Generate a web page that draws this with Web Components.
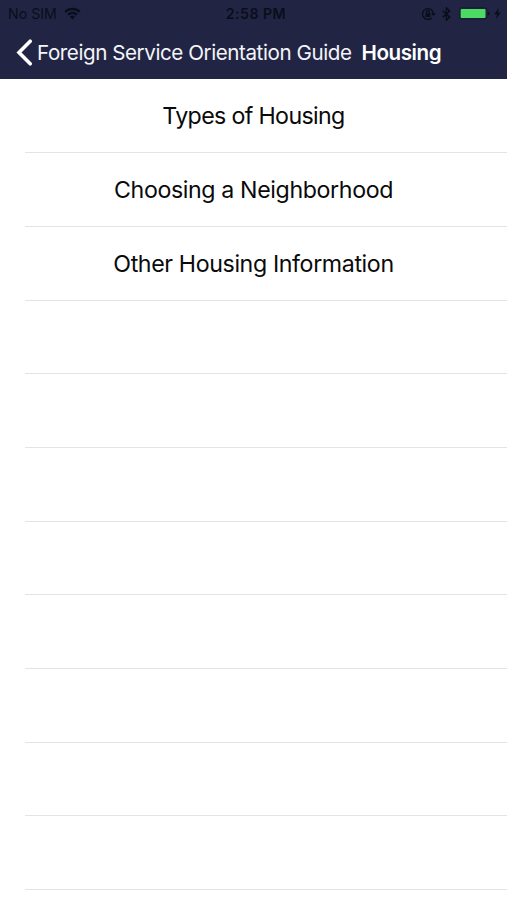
<!DOCTYPE html>
<html lang="en">
<head>
<meta charset="utf-8">
<meta name="viewport" content="width=device-width, initial-scale=1">
<title>Housing</title>
<style>
body{
    margin: 0;
    height: 900px;
    overflow: hidden;
    background: #fff;
    font-family: Inter, "Liberation Sans", sans-serif;
}
</style>
</head>
<body>
<guide-screen>
    <status-bar slot="header" carrier="No SIM" time="2:58 PM"></status-bar>
    <nav-bar slot="header" back="Foreign Service Orientation Guide">Housing</nav-bar>
    <list-row style="--spacing: -0.65px">Types of Housing</list-row>
    <list-row style="--spacing: -0.38px">Choosing a Neighborhood</list-row>
    <list-row style="--spacing: -0.38px">Other Housing Information</list-row>
    <list-row></list-row>
    <list-row></list-row>
    <list-row></list-row>
    <list-row></list-row>
    <list-row></list-row>
    <list-row></list-row>
    <list-row></list-row>
    <list-row></list-row>
</guide-screen>

<script>
const screenTemplate = document.createElement('template');
screenTemplate.innerHTML =
`
<style>
:host{
    display: block;
}
header{
    height: 79px;
    background: #212543;
    box-sizing: border-box;
}
main{
    padding-top: 0.47px;
}
</style>
<header><slot name="header"></slot></header>
<main><slot></slot></main>
`

class GuideScreen extends HTMLElement {
    constructor(){
        super();
        this.attachShadow({mode:'open'});
        this.shadowRoot.appendChild(screenTemplate.content.cloneNode(true));
    }
}

const statusTemplate = document.createElement('template');
statusTemplate.innerHTML =
`
<style>
:host{
    display: grid;
    grid-template-columns: 1fr auto 1fr;
    align-items: center;
    height: 27px;
    padding: 0 6px 0 8px;
    color: #0b0d1b;
    font-size: 14.2px;
    line-height: 27px;
}
.left, .right{
    display: flex;
    align-items: center;
}
.left{
    gap: 7px;
}
.right{
    justify-content: flex-end;
}
.time{
    padding-left: 3px;
    font-weight: 600;
    letter-spacing: 0.45px;
}
svg{
    display: block;
}
</style>
<div class="left">
    <span class="carrier"></span>
    <svg width="17" height="13" viewBox="0 0 17 13" fill="none" stroke="#0b0d1b" stroke-width="2.3">
        <path d="M1.2 4.9a10.4 10.4 0 0 1 14.6 0"/>
        <path d="M4 7.8a6.4 6.4 0 0 1 9 0"/>
        <path d="M8.5 12.4L5.9 9.8a3.7 3.7 0 0 1 5.2 0z" fill="#0b0d1b" stroke="none"/>
    </svg>
</div>
<span class="time"></span>
<div class="right">
    <svg width="15" height="14" viewBox="0 0 15 14" fill="none" stroke="#0b0d1b" stroke-width="1.4">
        <path d="M12.3 6.6A5.4 5.4 0 1 0 10.8 10.8"/>
        <path d="M10 6h4.8l-2.4 3z" fill="#0b0d1b" stroke="none"/>
        <path d="M5.4 6.5V5.2a1.5 1.5 0 0 1 3 0v1.3"/>
        <rect x="4.4" y="6.2" width="5" height="3.7" rx=".5" fill="#0b0d1b" stroke="none"/>
    </svg>
    <svg style="margin-left: 6px" width="9" height="14" viewBox="0 0 9 14" fill="none" stroke="#0b0d1b" stroke-width="1.5">
        <path d="M.8 3.9l7 6L4.4 13V1l3.4 3.1-7 6"/>
    </svg>
    <svg style="margin-left: 8px" width="31" height="13" viewBox="0 0 31 13">
        <rect x=".6" y=".9" width="27.6" height="11.2" rx="2.4" fill="none" stroke="#171a31" stroke-width="1"/>
        <rect x="1.7" y="2" width="24.8" height="9" rx="1" fill="#4cd964"/>
        <path d="M29.2 4.6a2 2 0 0 1 0 3.8z" fill="#0b0d1b"/>
    </svg>
    <svg style="margin-left: 4px" width="7" height="11" viewBox="0 0 7 11">
        <path d="M4.7 0L.2 6.2h2.7L2 11l4.8-6.4H4z" fill="#0b0d1b"/>
    </svg>
</div>
`

class StatusBar extends HTMLElement {
    constructor(){
        super();
        this.attachShadow({mode:'open'});
        this.shadowRoot.appendChild(statusTemplate.content.cloneNode(true));
    }
    connectedCallback(){
        this.shadowRoot.querySelector('.carrier').textContent = this.getAttribute('carrier');
        this.shadowRoot.querySelector('.time').textContent = this.getAttribute('time');
    }
}

const navTemplate = document.createElement('template');
navTemplate.innerHTML =
`
<style>
:host{
    display: flex;
    align-items: center;
    height: 52px;
    padding-left: 15px;
    color: #f4f5fb;
    font-size: 20.6px;
    line-height: 52px;
    white-space: nowrap;
}
svg{
    display: block;
    margin: 0 4px 1px 0;
}
.back{
    letter-spacing: -0.43px;
}
.title{
    margin-left: 10px;
    font-weight: 600;
    letter-spacing: -0.42px;
    color: #fff;
}
</style>
<svg width="18" height="27" viewBox="0 0 18 27" fill="none" stroke="#fff" stroke-width="3.6" stroke-linecap="round">
    <path d="M15.2 2.2L4 13.4l11.2 11.4"/>
</svg>
<span class="back"></span>
<span class="title"><slot></slot></span>
`

class NavBar extends HTMLElement {
    constructor(){
        super();
        this.attachShadow({mode:'open'});
        this.shadowRoot.appendChild(navTemplate.content.cloneNode(true));
    }
    connectedCallback(){
        this.shadowRoot.querySelector('.back').textContent = this.getAttribute('back');
    }
}

const rowTemplate = document.createElement('template');
rowTemplate.innerHTML =
`
<style>
:host{
    display: block;
    height: 73.7px;
    color: #0a0a0a;
    font-size: 23.2px;
    line-height: 75px;
    text-align: center;
    letter-spacing: var(--spacing, 0);
}
/* separator is inset on the left only */
.row{
    box-sizing: border-box;
    height: 100%;
    margin-left: 25px;
    padding-right: 25px;
    border-bottom: 1px solid #e4e4e6;
}
</style>
<div class="row"><slot></slot></div>
`

class ListRow extends HTMLElement {
    constructor(){
        super();
        this.attachShadow({mode:'open'});
        this.shadowRoot.appendChild(rowTemplate.content.cloneNode(true));
    }
}

window.customElements.define('guide-screen', GuideScreen);
window.customElements.define('status-bar', StatusBar);
window.customElements.define('nav-bar', NavBar);
window.customElements.define('list-row', ListRow);
</script>
</body>
</html>
